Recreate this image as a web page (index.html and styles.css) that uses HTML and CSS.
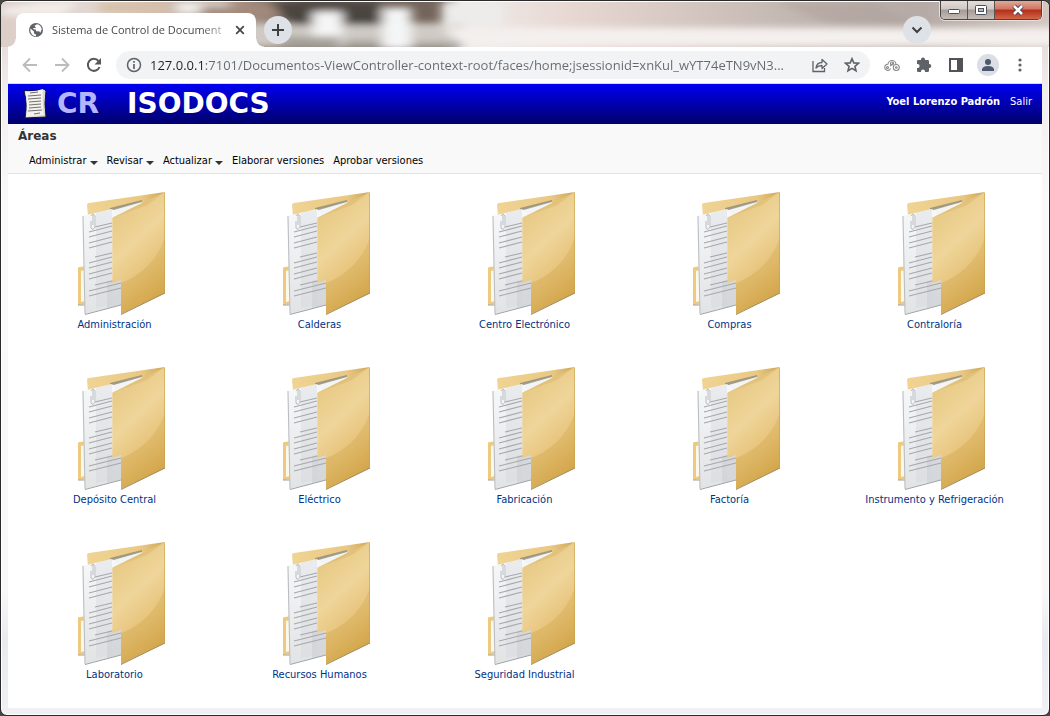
FILE: index.html
```html
<!DOCTYPE html>
<html lang="es">
<head>
<meta charset="utf-8">
<title>Sistema de Control de Documentos</title>
<link rel="stylesheet" href="styles.css">
</head>
<body>
<svg class="defs" width="0" height="0" aria-hidden="true">
  <defs>
    <linearGradient id="cover" x1="0.3" y1="0" x2="0.7" y2="1">
      <stop offset="0" stop-color="#e6c780"/><stop offset="0.4" stop-color="#efd59a"/><stop offset="0.7" stop-color="#e6c278"/><stop offset="1" stop-color="#d6a94c"/>
    </linearGradient>
    <linearGradient id="shade" x1="0.3" y1="0" x2="0.6" y2="1">
      <stop offset="0" stop-color="#e2be72"/><stop offset="1" stop-color="#c99a3a"/>
    </linearGradient>
    <linearGradient id="back" x1="0" y1="0" x2="1" y2="0">
      <stop offset="0" stop-color="#f0d494"/><stop offset="0.7" stop-color="#e9c883"/><stop offset="1" stop-color="#cda657"/>
    </linearGradient>
    <linearGradient id="sheet" x1="0" y1="0" x2="0" y2="1">
      <stop offset="0" stop-color="#f7f8f9"/><stop offset="1" stop-color="#e1e3e5"/>
    </linearGradient>
    <symbol id="folder" viewBox="1 0 128 128">
      <path d="M28 79q0-1 2-1l6-1v38l-8 1z" fill="#edca7f"/>
      <path d="M31 82l4-1v31l-4 1z" fill="#fbf7ec"/>
      <path d="M28 116h7" stroke="#a29d92"/>
      <path d="M37 16q0-2 2-2L115 3 92 20 38 27z" fill="url(#back)"/>
      <path d="M41 26L92 12v2L62 29H41z" fill="#f3f4f5"/>
      <path d="M60 19l32-8v2l-32 9z" fill="#8d8978" opacity=".8"/>
      <path d="M32 27l30-7 9 9v87l-36 9z" fill="url(#sheet)"/>
      <path d="M46 24l16-4v96l-16 3z" fill="#d2d5d9" opacity=".35"/>
      <path d="M57 92l14-3v27l-14 3z" fill="#cfd2d6" opacity=".7"/>
      <path d="M33 27l2 98" fill="none" stroke="#b9bcbe"/>
      <path d="M35 125.500l36-9.500" fill="none" stroke="#a0a3a5"/>
      <path d="M45 38l17-4M39 43l23-6M39 48l23-6M39 54l23-6M39 59l23-6M45 68l17-4M39 74l23-6M39 79l23-6M39 85l23-6M39 90l23-6M45 96l26-6M39 102l32-8M39 107l32-8" stroke="#a6a8aa" stroke-width="1.100"/>
      <path d="M41 32v7q2 3 4-1V27q-2-4-4 0M43 26v10" fill="none" stroke="#b9bcc0" stroke-width="1"/>
      <path d="M62.300 28.700L115 3v101l-44 21V91l-8.700 3z" fill="url(#cover)"/>
      <path d="M115 48C108 70 92 86 71 94v31l44-21z" fill="url(#shade)" opacity=".5"/>
      <path d="M62.300 28.700L115 3 97 16z" fill="#d9b366" opacity=".45"/>
      <path d="M71 125.500l44-21.500" fill="none" stroke="#a08a5c"/>
      <path d="M114.500 4v100" stroke="#c9a04a" opacity=".6"/>
    </symbol>
  </defs>
</svg>
<div class="window">
  <header class="titlebar">
    <svg class="glass" viewBox="0 0 1050 47" preserveAspectRatio="none" aria-hidden="true">
      <defs><filter id="blur" x="-5%" y="-20%" width="110%" height="140%"><feGaussianBlur stdDeviation="6 4"/></filter>
      <linearGradient id="haze" x1="0" x2="1" y1="0" y2="0">
        <stop offset="0" stop-color="#dccdc7"/><stop offset=".1" stop-color="#e3d8d2"/><stop offset=".23" stop-color="#a89083"/><stop offset=".29" stop-color="#665b53"/><stop offset=".42" stop-color="#75665c"/><stop offset=".44" stop-color="#eeedeb"/><stop offset=".54" stop-color="#e8d8d3"/><stop offset=".75" stop-color="#c4b8b3"/><stop offset=".88" stop-color="#b5aaa5"/><stop offset="1" stop-color="#d3c6c1"/>
      </linearGradient></defs>
      <rect width="1050" height="47" fill="url(#haze)"/>
      <g filter="url(#blur)">
        <path d="M0 14h60l20-14H40L0 6z" fill="#f3eeeb"/>
        <path d="M98 0h70v12H98z" fill="#d6c0a8"/><path d="M175 0h50l20 12h-70z" fill="#f2f1ef"/>
        <path d="M200 4h80v12h-80z" fill="#a38a7c"/>
        <path d="M235 22h230v25H235z" fill="#cfcac5"/>
        <path d="M270 0h110v24H290z" fill="#4c4540"/>
        <path d="M312 10h30v40h-30z" fill="#f6f5f5"/><path d="M382 6h29v44h-29z" fill="#f4f5f6"/>
        <path d="M280 36h60v14h-60zM345 40h35v10h-35zM412 42h50v8h-50z" fill="#a5a09a"/>
        <path d="M442 0h60v24h-60z" fill="#edecea"/><path d="M442 27h620v20H465z" fill="#f4f0ee"/>
        <path d="M775 0h100l45 25h-85z" fill="#a79b96" opacity=".4"/>
      </g>
    </svg>
    <div class="tab">
      <svg width="16" height="16" viewBox="0 0 16 16" aria-hidden="true"><circle cx="8" cy="8" r="7" fill="#5f6368"/><path d="M2.400 6.500L6 9.500v2l2 1v1.800C4 14.300 1.700 10 2.400 6.500zM6.500 3.800L9 2.300c3 .2 4.500 3 4.800 5l-1.500 3.500-1.300-1.500H8V7.500H6L5 6h3z" fill="#fff"/></svg>
      <span class="tab-title">Sistema de Control de Document</span>
      <button class="plain close-tab" aria-label="Cerrar pestaña"><svg width="10" height="10" viewBox="0 0 10 10"><path d="M1.200 1.200l7.600 7.600M8.800 1.200L1.200 8.800" stroke="#45484c" stroke-width="1.800"/></svg></button>
    </div>
    <button class="round" aria-label="Nueva pestaña"><svg width="14" height="14" viewBox="0 0 14 14"><path d="M7 1v12M1 7h12" stroke="#3c4043" stroke-width="2"/></svg></button>
    <button class="round search-tabs" aria-label="Buscar pestañas"><svg width="12" height="12" viewBox="0 0 12 12"><path d="M1.500 3.500L6 8l4.500-4.500" fill="none" stroke="#3c4043" stroke-width="2"/></svg></button>
    <div class="controls">
      <button aria-label="Minimizar"><svg width="14" height="8" viewBox="0 0 14 8"><rect x="1.500" y="3.500" width="11" height="4" rx="1" fill="#fff" stroke="#4b4f5c"/></svg></button>
      <button aria-label="Maximizar"><svg width="14" height="11" viewBox="0 0 14 11"><rect x="1.500" y=".5" width="11" height="9" rx="1" fill="#fff" stroke="#4b4f5c"/><rect x="4.500" y="3.500" width="5" height="3" fill="#bbb" stroke="#4b4f5c"/></svg></button>
      <button class="close" aria-label="Cerrar"><svg width="14" height="12" viewBox="0 0 14 12"><path d="M3 2l8 8M11 2l-8 8" stroke="#4c4556" stroke-width="4.500"/><path d="M3 2l8 8M11 2l-8 8" stroke="#fff" stroke-width="2.600"/></svg></button>
    </div>
  </header>
  <nav class="toolbar" aria-label="Navegador">
    <button class="plain" aria-label="Atrás"><svg width="16" height="16" viewBox="0 0 16 16"><path d="M15 8H2M8 1.500L1.500 8 8 14.500" fill="none" stroke="#babcbe" stroke-width="1.800"/></svg></button>
    <button class="plain" aria-label="Adelante"><svg width="16" height="16" viewBox="0 0 16 16"><path d="M1 8h13M8 1.500L14.500 8 8 14.500" fill="none" stroke="#babcbe" stroke-width="1.800"/></svg></button>
    <button class="plain" aria-label="Recargar"><svg width="16" height="16" viewBox="0 0 16 16"><path d="M13.500 10A6 6 0 1 1 12.500 4" fill="none" stroke="#55585c" stroke-width="2"/><path d="M15 1v6.500H8.500z" fill="#55585c"/></svg></button>
    <div class="address">
      <svg width="16" height="16" viewBox="0 0 16 16" aria-hidden="true"><circle cx="8" cy="8" r="6.500" fill="none" stroke="#5f6368" stroke-width="1.500"/><path d="M8 7v5M8 4v1.700" stroke="#5f6368" stroke-width="1.700"/></svg>
      <input type="text" aria-label="Dirección" value="127.0.0.1:7101/Documentos-ViewController-context-root/faces/home;jsessionid=xnKul_wYT74eTN9vN3...">
      <button class="plain" aria-label="Compartir"><svg width="16" height="16" viewBox="0 0 16 16"><path d="M1 4v10.500h11.500V11" fill="none" stroke="#5f6368" stroke-width="1.300"/><path d="M4 11c.5-4 3-5.500 6-5.500V2.500L15 7l-5 4.500v-3C7.500 8.500 5.500 9.200 4 11z" fill="none" stroke="#5f6368" stroke-width="1.300" stroke-linejoin="round"/></svg></button>
      <button class="plain star" aria-label="Marcador"><svg width="16" height="16" viewBox="0 0 16 16"><path d="M8 1.700l1.800 4.200 4.700.4-3.600 3 1.100 4.500L8 11.400l-4 2.400 1.100-4.500-3.600-3 4.700-.4z" fill="none" stroke="#5f6368" stroke-width="1.600"/></svg></button>
    </div>
    <button class="plain" aria-label="Extensión"><svg width="16" height="14" viewBox="0 0 16 14"><g fill="none" stroke="#87898b" stroke-width="1.100"><path d="M6.500 10.500A3 3 0 1 1 4 6.300M4 6.500a4 4 0 0 1 8 0M6 8l4-3.500"/><circle cx="12.300" cy="9.500" r="3"/><circle cx="8" cy="5.500" r="1.500"/><circle cx="3.500" cy="9.500" r="1"/><circle cx="12.300" cy="9.500" r=".8"/></g></svg></button>
    <button class="plain" aria-label="Extensiones"><svg width="16" height="16" viewBox="0 0 16 16"><path d="M1 4.300q0-1.300 1.300-1.300H5v-.4a2 2 0 0 1 4 0V3h2.700Q13 3 13 4.300V7h.3a2 2 0 0 1 0 4H13v2.700q0 1.300-1.300 1.300H9v-.6a2 2 0 0 0-4 0v.6H2.300Q1 15 1 13.700V11h.6a2 2 0 0 0 0-4H1z" fill="#5f6368"/></svg></button>
    <button class="plain" aria-label="Panel lateral"><svg width="16" height="16" viewBox="0 0 16 16"><path d="M1 1h14v14H1zM3 3v10h6V3z" fill="#505458" fill-rule="evenodd"/></svg></button>
    <button class="plain avatar" aria-label="Perfil"><svg width="22" height="22" viewBox="0 0 22 22"><circle cx="11" cy="11" r="11" fill="#dbdee5"/><circle cx="11" cy="8" r="3" fill="#4c566c"/><path d="M5 17v-2q1-3 6-3t6 3v2z" fill="#4c566c"/></svg></button>
    <button class="plain" aria-label="Menú"><svg width="16" height="16" viewBox="0 0 16 16" fill="#5f6368"><circle cx="8" cy="3" r="1.600"/><circle cx="8" cy="8" r="1.600"/><circle cx="8" cy="13" r="1.600"/></svg></button>
  </nav>
  <main class="page">
    <div class="brand">
      <svg width="24" height="32" viewBox="0 0 24 32" aria-hidden="true"><path d="M1 3q10 1 20-2l2 2q-2 12 0 26l-21 1q3-13-1-27z" fill="#d9d5cb" stroke="#17162a"/><path d="M2 3q10 1 18-2-1 14 1 26L3 29Q5 15 2 3z" fill="#f4f2ec"/><path d="M7 5l8-1M5 8l13-1M5 11l13-1M6 14l12-1M6 17l12-1M6 20l12-1M5 23l14-1M11 26l6-1" stroke="#717176" stroke-width="1"/></svg>
      <div class="logo"><span class="logo-cr">CR</span><span>ISODOCS</span></div>
      <div class="user"><strong>Yoel Lorenzo Padrón</strong><a href="#">Salir</a></div>
    </div>
    <div class="section">
      <h1>Áreas</h1>
      <div class="menu">
        <button class="drop">Administrar</button>
        <button class="drop">Revisar</button>
        <button class="drop">Actualizar</button>
        <button>Elaborar versiones</button>
        <button>Aprobar versiones</button>
      </div>
    </div>
    <div class="areas">
      <a href="#"><svg><use href="#folder"/></svg>Administración</a>
      <a href="#"><svg><use href="#folder"/></svg>Calderas</a>
      <a href="#"><svg><use href="#folder"/></svg>Centro Electrónico</a>
      <a href="#"><svg><use href="#folder"/></svg>Compras</a>
      <a href="#"><svg><use href="#folder"/></svg>Contraloría</a>
      <a href="#"><svg><use href="#folder"/></svg>Depósito Central</a>
      <a href="#"><svg><use href="#folder"/></svg>Eléctrico</a>
      <a href="#"><svg><use href="#folder"/></svg>Fabricación</a>
      <a href="#"><svg><use href="#folder"/></svg>Factoría</a>
      <a href="#"><svg><use href="#folder"/></svg>Instrumento y Refrigeración</a>
      <a href="#"><svg><use href="#folder"/></svg>Laboratorio</a>
      <a href="#"><svg><use href="#folder"/></svg>Recursos Humanos</a>
      <a href="#"><svg><use href="#folder"/></svg>Seguridad Industrial</a>
    </div>
  </main>
</div>
</body>
</html>
```
FILE: styles.css
```css
* { box-sizing: border-box; }
body {
  margin: 0;
  background: #4a4643;
  font-family: "DejaVu Sans Condensed", "DejaVu Sans", sans-serif;
  font-size: 11px;
}
.defs { position: absolute; }
button { font: inherit; margin: 0; padding: 0; border: 0; background: none; color: inherit; }
svg { display: block; flex: none; }
a { text-decoration: none; }
.window {
  position: relative;
  display: flex;
  flex-direction: column;
  min-height: 100vh;
  padding: 0 7px 7px;
  border: 1px solid #2b2a2b;
  border-radius: 7px;
  overflow: hidden;
  background: linear-gradient(#dacfca 0, #f2eeed 90px, #f9f9fa 200px, #f8f8f9 590px, #e9eaef 640px, #f0f1f5 100%);
  box-shadow: inset 0 0 0 1px #fff;
}
.titlebar {
  display: flex;
  align-items: flex-start;
  height: 46px;
  padding-left: 8px;
}
.glass {
  position: absolute;
  left: 0;
  top: 1px;
  width: 100%;
  height: 45px;
}
.tab, .round, .controls { position: relative; }
.tab {
  display: flex;
  align-items: center;
  gap: 8px;
  width: 240px;
  height: 34px;
  margin: 12px 8px 0 0;
  padding: 0 11px 0 12px;
  border-radius: 8px 8px 0 0;
  background: #fff;
}
.tab::before, .tab::after {
  content: "";
  position: absolute;
  bottom: 0;
  width: 8px;
  height: 8px;
}
.tab::before { left: -8px; background: radial-gradient(circle at 0 0, transparent 7px, #fff 8px); }
.tab::after { right: -8px; background: radial-gradient(circle at 100% 0, transparent 7px, #fff 8px); }
.tab-title {
  flex: 1;
  min-width: 0;
  white-space: nowrap;
  font: 11px/16px "Open Sans", "Noto Sans", sans-serif;
  color: #45484c;
  -webkit-mask-image: linear-gradient(90deg, #000 150px, transparent 182px);
  mask-image: linear-gradient(90deg, #000 150px, transparent 182px);
}
.round {
  display: grid;
  place-items: center;
  width: 28px;
  height: 28px;
  margin-top: 15px;
  border-radius: 50%;
  background: #dee1e6;
}
.search-tabs { margin-left: auto; margin-right: 9px; }
.controls {
  display: flex;
  height: 19px;
  border: 1px solid #4a4442;
  border-top: 0;
  border-radius: 0 0 5px 5px;
  overflow: hidden;
  box-shadow: 0 0 0 1px #e6dedb;
}
.controls button {
  display: grid;
  place-items: center;
  width: 27px;
  border-right: 1px solid #5a5350;
  background: linear-gradient(#e3ddda 0, #cfc7c3 45%, #a59b96 50%, #c5bcb7 100%);
}
.controls .close { width: 46px; border: 0; background: linear-gradient(#e0a898 0, #cf7461 45%, #b32e18 50%, #d26548 100%); }
.toolbar {
  display: flex;
  align-items: center;
  gap: 16px;
  height: 37px;
  padding: 0 14px;
  background: #fff;
  border-bottom: 1px solid #d8dadd;
}
.address {
  flex: 1;
  display: flex;
  align-items: center;
  height: 28px;
  margin: 0 -2px;
  padding: 0 10px;
  border-radius: 14px;
  background: #f1f3f4;
}
.address input {
  flex: 1;
  min-width: 0;
  margin: 0 8px;
  padding: 0;
  border: 0;
  outline: 0;
  font: 13px/20px "Open Sans", "Noto Sans", sans-serif;
  color: transparent;
  background: linear-gradient(90deg, #202124 55px, #65696d 55px);
  -webkit-background-clip: text;
  background-clip: text;
}
.star { margin-left: 16px; }
.avatar { margin: 0 -3px; }
.page { flex: 1; background: #fff; }
.brand {
  display: flex;
  align-items: center;
  height: 40px;
  padding: 0 10px 0 15px;
  background: linear-gradient(#0000f2, #00006c);
  color: #fff;
}
.logo {
  display: flex;
  flex: 1;
  gap: 28px;
  padding-left: 10px;
  font: bold 28px/40px "DejaVu Sans", sans-serif;
}
.logo-cr { color: #b5b5ff; }
.user { display: flex; gap: 10px; height: 14px; line-height: 14px; margin-bottom: 4px; }
.user a { color: #fff; }
.section {
  height: 50px;
  padding: 4px 10px 0;
  background: #f9f9f9;
  border-bottom: 1px solid #e4e4e4;
}
h1 { margin: 0; font: bold 12px/17px "DejaVu Sans", sans-serif; color: #333; }
.menu { display: flex; gap: 9px; padding: 8px 11px 0; line-height: 16px; color: #000; }
.drop { display: flex; align-items: center; gap: 3px; }
.drop::after {
  content: "";
  margin-top: 4px;
  border: 4px solid transparent;
  border-top-color: #333;
  border-bottom: 0;
}
.areas {
  display: grid;
  grid-template-columns: repeat(5, 1fr);
  grid-auto-rows: 145px;
  gap: 30px 0;
  padding: 15px 5px 0 4px;
}
.areas a {
  display: flex;
  flex-direction: column;
  align-items: center;
  line-height: 16px;
  color: #003286;
}
.areas svg { width: 128px; height: 128px; }
```
